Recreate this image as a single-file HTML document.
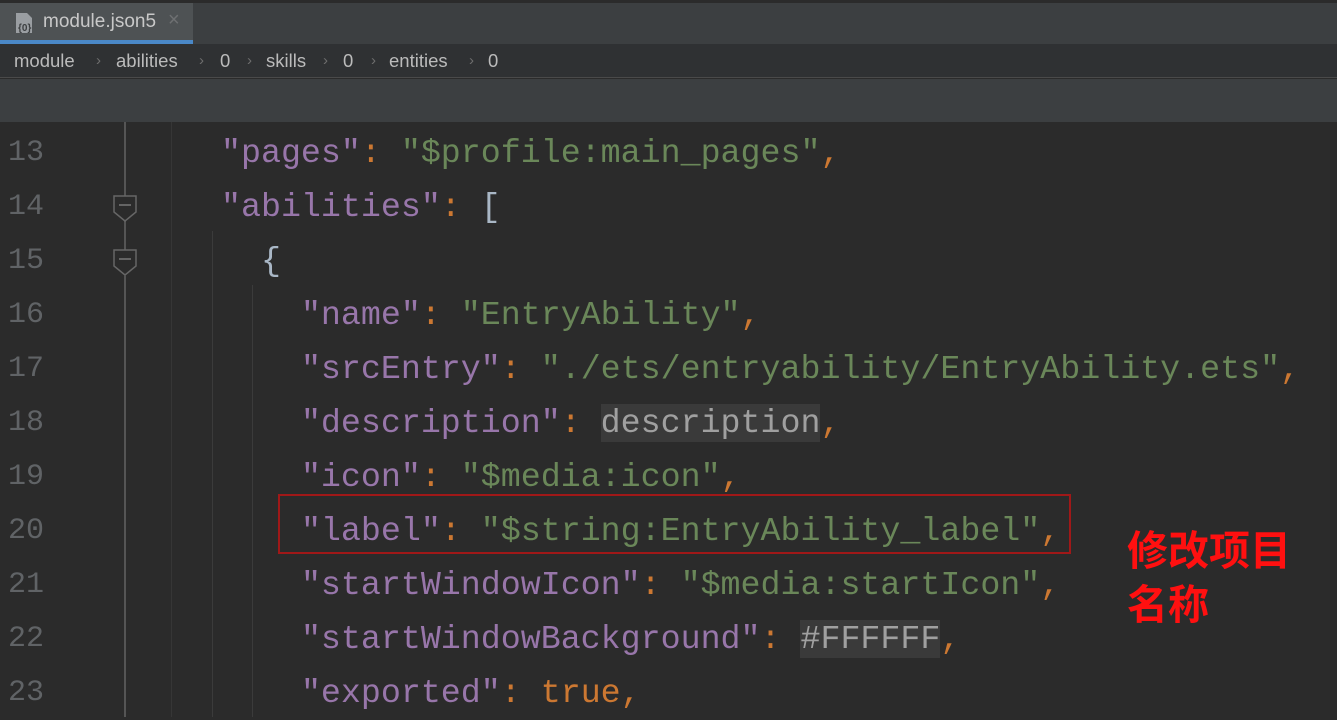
<!DOCTYPE html>
<html><head><meta charset="utf-8"><style>
*{margin:0;padding:0;box-sizing:border-box}
body{width:1337px;height:717px;overflow:hidden;background:#2b2b2b;position:relative;font-family:"Liberation Sans",sans-serif}
.abs{position:absolute}
.code{position:absolute;left:221px;font-family:"Liberation Mono",monospace;font-size:33.3px;white-space:pre;line-height:54px;height:54px;color:#a9b7c6}
.k{color:#9876aa}.s{color:#6a8759}.o{color:#cc7832}.h{background:#3a3a3a;color:#a0a0a0}
.ln{position:absolute;left:8px;width:40px;font-family:"Liberation Mono",monospace;font-size:30px;color:#606366;line-height:54px}
.bc{position:absolute;top:44px;height:34px;line-height:34px;font-size:18.5px;color:#bbbbbb}
.ar{color:#6e6e6e;font-size:15px}
</style></head><body>
<div class="abs" style="left:0;top:0;width:1337px;height:44px;background:#3c3f41;border-top:3px solid #2b2b2b"></div>
<div class="abs" style="left:0;top:3px;width:193px;height:41px;background:#4e5254"></div>
<div class="abs" style="left:0;top:40px;width:193px;height:4px;background:#4a88c7"></div>
<svg class="abs" style="left:14px;top:12px" width="22" height="22" viewBox="0 0 22 22"><path d="M2 1h11l5 5v15H2z" fill="#9a9ea2"/><text x="4" y="19" font-size="10" font-family="Liberation Sans" fill="#3c3f41" font-weight="bold">{0}</text></svg>
<div class="abs" style="left:43px;top:11px;font-size:19px;color:#c8c8c8">module.json5</div>
<div class="abs" style="left:168px;top:9px;font-size:20px;color:#6e7072">×</div>
<div class="abs" style="left:0;top:44px;width:1337px;height:34px;background:#2f3133;border-bottom:1px solid #4a4a4a"></div>
<div class="bc" style="left:14px">module</div><div class="bc ar" style="left:96px">›</div>
<div class="bc" style="left:116px">abilities</div><div class="bc ar" style="left:199px">›</div>
<div class="bc" style="left:220px">0</div><div class="bc ar" style="left:247px">›</div>
<div class="bc" style="left:266px">skills</div><div class="bc ar" style="left:323px">›</div>
<div class="bc" style="left:343px">0</div><div class="bc ar" style="left:371px">›</div>
<div class="bc" style="left:389px">entities</div><div class="bc ar" style="left:469px">›</div>
<div class="bc" style="left:488px">0</div>
<div class="abs" style="left:0;top:79px;width:1337px;height:43px;background:#3c3f41"></div>
<div class="abs" style="left:0;top:122px;width:172px;height:595px;background:#2b2b2b"></div>
<div class="abs" style="left:124px;top:122px;width:2px;height:595px;background:#555"></div>
<div class="abs" style="left:171px;top:122px;width:1px;height:595px;background:#363636"></div>
<div class="abs" style="left:212px;top:231px;width:1px;height:486px;background:#3b3b3b"></div>
<div class="abs" style="left:252px;top:285px;width:1px;height:432px;background:#3b3b3b"></div>
<svg class="abs" style="left:113px;top:195px" width="24" height="80" viewBox="0 0 24 80"><path d="M1 1h22v16l-11 9l-11-9z" fill="#2b2b2b" stroke="#666" stroke-width="1.5"/><path d="M6 10h12" stroke="#777" stroke-width="1.5"/><path d="M1 55h22v16l-11 9l-11-9z" fill="#2b2b2b" stroke="#666" stroke-width="1.5"/><path d="M6 64h12" stroke="#777" stroke-width="1.5"/></svg>
<div class="ln" style="top:126px">13</div><div class="ln" style="top:180px">14</div><div class="ln" style="top:234px">15</div><div class="ln" style="top:288px">16</div><div class="ln" style="top:342px">17</div><div class="ln" style="top:396px">18</div><div class="ln" style="top:450px">19</div><div class="ln" style="top:504px">20</div><div class="ln" style="top:558px">21</div><div class="ln" style="top:612px">22</div><div class="ln" style="top:666px">23</div>
<div class="code" style="top:126px"><span class="k">"pages"</span><span class="o">:</span> <span class="s">"$profile:main_pages"</span><span class="o">,</span></div>
<div class="code" style="top:180px"><span class="k">"abilities"</span><span class="o">:</span> [</div>
<div class="code" style="top:234px">  {</div>
<div class="code" style="top:288px">    <span class="k">"name"</span><span class="o">:</span> <span class="s">"EntryAbility"</span><span class="o">,</span></div>
<div class="code" style="top:342px">    <span class="k">"srcEntry"</span><span class="o">:</span> <span class="s">"./ets/entryability/EntryAbility.ets"</span><span class="o">,</span></div>
<div class="code" style="top:396px">    <span class="k">"description"</span><span class="o">:</span> <span class="h">description</span><span class="o">,</span></div>
<div class="code" style="top:450px">    <span class="k">"icon"</span><span class="o">:</span> <span class="s">"$media:icon"</span><span class="o">,</span></div>
<div class="code" style="top:504px">    <span class="k">"label"</span><span class="o">:</span> <span class="s">"$string:EntryAbility_label"</span><span class="o">,</span></div>
<div class="code" style="top:558px">    <span class="k">"startWindowIcon"</span><span class="o">:</span> <span class="s">"$media:startIcon"</span><span class="o">,</span></div>
<div class="code" style="top:612px">    <span class="k">"startWindowBackground"</span><span class="o">:</span> <span class="h">#FFFFFF</span><span class="o">,</span></div>
<div class="code" style="top:666px">    <span class="k">"exported"</span><span class="o">:</span> <span class="o">true,</span></div>
<div class="abs" style="left:278px;top:494px;width:793px;height:60px;border:2px solid #a01818"></div>
<div class="abs" style="left:1127px;top:524px;font-family:'Liberation Sans','Noto Sans CJK SC',sans-serif;font-weight:bold;font-size:41px;line-height:54px;color:#ff1010">修改项目<br>名称</div>
</body></html>
